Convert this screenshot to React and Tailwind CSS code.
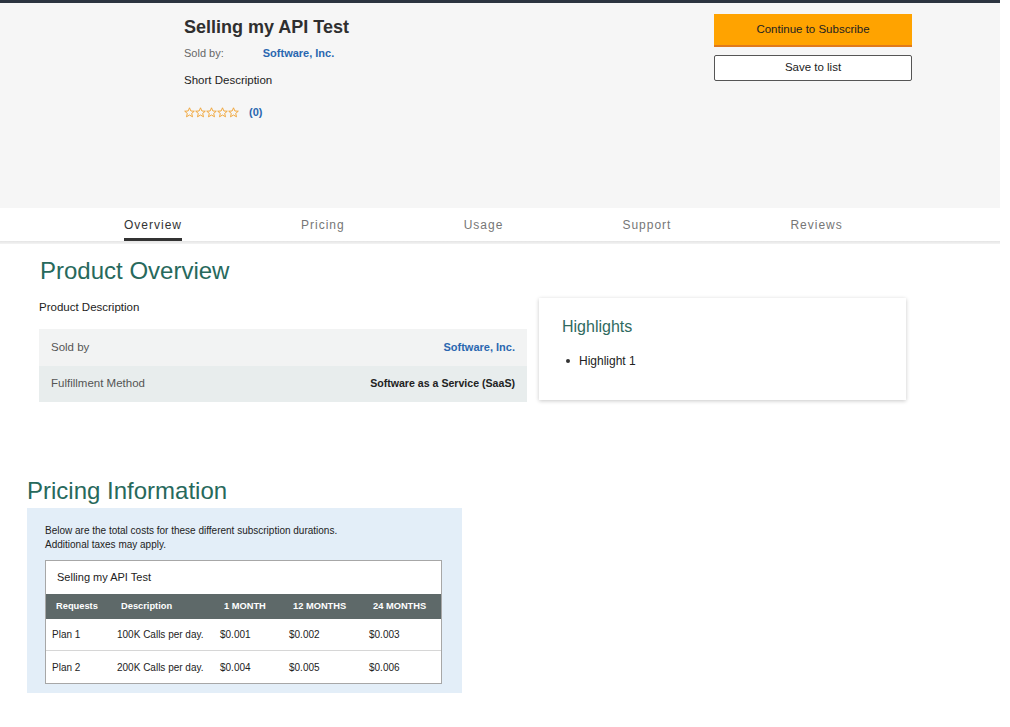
import React from "react";

const font = { fontFamily: '"Liberation Sans", Arial, sans-serif' };

function Stars() {
  const star =
    "M5.5 0.8 L6.9 4.0 L10.3 4.2 L7.7 6.4 L8.5 9.8 L5.5 8.0 L2.5 9.8 L3.3 6.4 L0.7 4.2 L4.1 4.0 Z";
  return (
    <svg width="55" height="11" viewBox="0 0 55 11">
      {[0, 1, 2, 3, 4].map((i) => (
        <path
          key={i}
          d={star}
          transform={`translate(${i * 11} 0)`}
          fill="none"
          stroke="#f0a02c"
          strokeWidth="0.9"
          strokeLinejoin="round"
        />
      ))}
    </svg>
  );
}

function Tab({ label, active }) {
  return (
    <div
      className={`h-full flex items-center border-b-[3px] text-[12px] tracking-[1px] ${
        active ? "border-[#333] text-[#333]" : "border-transparent text-[#767676]"
      }`}
    >
      <span className="pt-[3px]">{label}</span>
    </div>
  );
}

export default function App() {
  const rows = [
    ["Plan 1", "100K Calls per day.", "$0.001", "$0.002", "$0.003"],
    ["Plan 2", "200K Calls per day.", "$0.004", "$0.005", "$0.006"],
  ];
  const cols = "grid grid-cols-[68px_103px_69px_80px_75px]";
  return (
    <div className="w-[1010px] min-h-[727px] bg-white text-[#111]" style={font}>
      <div className="w-[1000px]">
        <div className="h-[3px] bg-[#2c3440]" />
        {/* Header */}
        <div className="h-[205px] bg-[#f6f6f6] flex">
          <div className="ml-[184px] w-[530px] pt-[12px]">
            <div className="text-[18px] leading-[24px] font-bold text-[#2f2f2f]">
              Selling my API Test
            </div>
            <div className="mt-[6px] text-[11px] leading-[16px] flex">
              <span className="text-[#666]">Sold by:</span>
              <span className="ml-[39px] text-[#2a67b0] font-bold">Software, Inc.</span>
            </div>
            <div className="mt-[11px] text-[11.5px] leading-[16px] text-[#222]">
              Short Description
            </div>
            <div className="mt-[16px] h-[16px] flex items-center">
              <Stars />
              <span className="ml-[10px] text-[11px] font-bold text-[#2a67b0]">(0)</span>
            </div>
          </div>
          <div className="pt-[11px] w-[198px]">
            <div className="h-[33px] bg-[#ffa300] border-b-2 border-[#e07a1c] flex items-center justify-center text-[11.5px] text-[#222]">
              Continue to Subscribe
            </div>
            <div className="mt-[8px] h-[26px] bg-white border border-[#555] rounded-[2px] flex items-center justify-center text-[11.5px] text-[#222]">
              Save to list
            </div>
          </div>
        </div>
        {/* Tabs */}
        <div className="h-[33px] bg-white flex gap-[119px] pl-[124px]">
          <Tab label="Overview" active />
          <Tab label="Pricing" />
          <Tab label="Usage" />
          <Tab label="Support" />
          <Tab label="Reviews" />
        </div>
        <div className="h-[3px] bg-gradient-to-b from-[#e4e4e4] to-[#f4f4f4]" />

        {/* Product overview */}
        <div className="pl-[40px] mt-[13px] text-[24px] leading-[28px] text-[#27695c]">
          Product Overview
        </div>
        <div className="flex items-start pl-[39px] mt-[13px]">
          <div className="w-[488px]">
            <div className="pt-[1px] text-[11.5px] leading-[16px] text-[#222]">
              Product Description
            </div>
            <div className="mt-[14px] text-[11.5px]">
              <div className="h-[37px] bg-[#f2f3f3] flex items-center justify-between px-[12px]">
                <span className="text-[#555]">Sold by</span>
                <span className="text-[#2a67b0] font-bold text-[11px]">Software, Inc.</span>
              </div>
              <div className="h-[36px] bg-[#e8eded] flex items-center justify-between px-[12px]">
                <span className="text-[#555]">Fulfillment Method</span>
                <span className="text-[#222] font-bold text-[10.6px]">Software as a Service (SaaS)</span>
              </div>
            </div>
          </div>
          <div className="ml-[12px] w-[367px] h-[102px] bg-white shadow-[0_1px_4px_rgba(0,0,0,0.22)] pl-[23px] pt-[19px]">
            <div className="text-[16px] leading-[20px] text-[#2f6a60]">Highlights</div>
            <div className="mt-[16px] flex items-center text-[12px] leading-[16px] text-[#222]">
              <span className="ml-[4px] w-[4px] h-[4px] rounded-full bg-[#333]" />
              <span className="ml-[9px]">Highlight 1</span>
            </div>
          </div>
        </div>

        {/* Pricing */}
        <div className="pl-[27px] mt-[75px] text-[24px] leading-[28px] text-[#27695c]">
          Pricing Information
        </div>
        <div className="ml-[27px] mt-[3px] w-[435px] bg-[#e3eef8] pl-[18px] pr-[20px] pt-[16px] pb-[9px]">
          <div className="text-[10px] leading-[14px] text-[#222]">
            Below are the total costs for these different subscription durations.
            <br />
            Additional taxes may apply.
          </div>
          <div className="mt-[8px] bg-white border border-[#a7a7a7]">
            <div className="h-[33px] flex items-center pl-[11px] text-[11px] text-[#222]">
              Selling my API Test
            </div>
            <div className={`${cols} h-[25px] items-center bg-[#5e6969] text-white font-bold text-[9.3px]`}>
              <span className="pl-[10px]">Requests</span>
              <span className="pl-[7px]">Description</span>
              <span className="pl-[7px]">1 MONTH</span>
              <span className="pl-[7px]">12 MONTHS</span>
              <span className="pl-[7px]">24 MONTHS</span>
            </div>
            {rows.map((r, i) => (
              <div
                key={i}
                className={`${cols} h-[32px] items-center text-[10px] text-[#222] ${
                  i === 0 ? "border-b border-[#d6d6d6]" : ""
                }`}
              >
                {r.map((c, j) => (
                  <span key={j} className={j === 0 ? "pl-[6px]" : "pl-[3px]"}>
                    {c}
                  </span>
                ))}
              </div>
            ))}
          </div>
        </div>
      </div>
    </div>
  );
}
